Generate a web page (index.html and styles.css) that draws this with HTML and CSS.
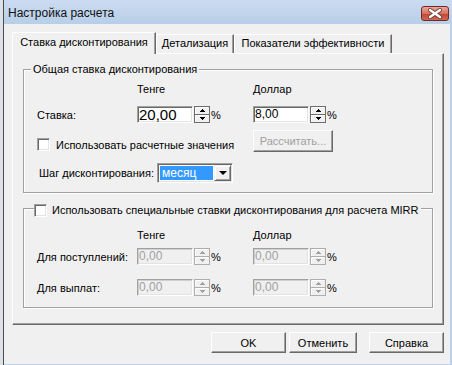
FILE: index.html
```html
<!DOCTYPE html>
<html>
  <head>
    <meta charset="UTF-8" />
    <title>Настройка расчета</title>
    <link rel="stylesheet" href="styles.css">
  </head>
  <body>
    <div class="window">
      <div class="titlebar">
        <span class="title">Настройка расчета</span>
        <span class="close">
          <svg width="26" height="13" viewBox="0 0 26 13">
            <path d="M8 3 L18 10 M18 3 L8 10" stroke="#6a3b35" stroke-width="4" stroke-linecap="round" fill="none" />
            <path d="M8 3 L18 10 M18 3 L8 10" stroke="#fff" stroke-width="2.4" stroke-linecap="round" fill="none" />
          </svg>
        </span>
      </div>

      <div class="client">
        <div class="tabs">
          <div class="tab active">Ставка дисконтирования</div>
          <div class="tab tab-detail">Детализация</div>
          <div class="tab tab-eff">Показатели эффективности</div>
        </div>

        <div class="panel">
          <div class="group group-rate">
            <div class="group-title">Общая ставка дисконтирования</div>

            <div class="row row-head">
              <span></span>
              <span>Тенге</span>
              <span>Доллар</span>
            </div>

            <div class="row row-field">
              <span>Ставка:</span>
              <div class="field">
                <span class="edit big">20,00</span>
                <svg class="spin" width="16" height="17" viewBox="0 0 16 17" shape-rendering="crispEdges">
                  <rect x="0.5" y="0.5" width="15" height="16" fill="#f0f0f0" stroke="#6d6d6d" />
                  <path d="M1 8.5 H15" stroke="#6d6d6d" />
                  <path d="M1.5 1.5 H14 M1.5 1.5 V8 M1.5 9.5 H14 M1.5 9.5 V16" stroke="#fff" />
                  <polygon points="5,6 11,6 8,3" fill="#000" />
                  <polygon points="5,11 11,11 8,14" fill="#000" />
                </svg>
                <span class="pct">%</span>
              </div>
              <div class="field">
                <span class="edit">8,00</span>
                <svg class="spin" width="16" height="17" viewBox="0 0 16 17" shape-rendering="crispEdges">
                  <rect x="0.5" y="0.5" width="15" height="16" fill="#f0f0f0" stroke="#6d6d6d" />
                  <path d="M1 8.5 H15" stroke="#6d6d6d" />
                  <path d="M1.5 1.5 H14 M1.5 1.5 V8 M1.5 9.5 H14 M1.5 9.5 V16" stroke="#fff" />
                  <polygon points="5,6 11,6 8,3" fill="#000" />
                  <polygon points="5,11 11,11 8,14" fill="#000" />
                </svg>
                <span class="pct">%</span>
              </div>
            </div>

            <div class="row row-check">
              <div class="check-line">
                <span class="checkbox"></span>
                <span>Использовать расчетные значения</span>
              </div>
              <span class="btn btn-calc">Рассчитать...</span>
            </div>

            <div class="step-row">
              <span class="step-label">Шаг дисконтирования:</span>
              <div class="combo">
                <span class="combo-value">месяц</span>
                <span class="combo-btn"><span class="arrow-down"></span></span>
              </div>
            </div>
          </div>

          <div class="group group-mirr">
            <div class="group-check">
              <span class="checkbox"></span>
              <span>Использовать специальные ставки дисконтирования для расчета MIRR</span>
            </div>

            <div class="row row-head row-head-mirr">
              <span></span>
              <span>Тенге</span>
              <span>Доллар</span>
            </div>

            <div class="row row-field row-in">
              <span>Для поступлений:</span>
              <div class="field">
                <span class="edit disabled">0,00</span>
                <svg class="spin" width="16" height="17" viewBox="0 0 16 17" shape-rendering="crispEdges">
                  <rect x="0.5" y="0.5" width="15" height="16" fill="#f0f0f0" stroke="#adadad" />
                  <path d="M1 8.5 H15" stroke="#adadad" />
                  <path d="M1.5 1.5 H14 M1.5 1.5 V8 M1.5 9.5 H14 M1.5 9.5 V16" stroke="#fff" />
                  <polygon points="5,6 11,6 8,3" fill="#a0a0a0" />
                  <polygon points="5,11 11,11 8,14" fill="#a0a0a0" />
                </svg>
                <span class="pct">%</span>
              </div>
              <div class="field">
                <span class="edit disabled">0,00</span>
                <svg class="spin" width="16" height="17" viewBox="0 0 16 17" shape-rendering="crispEdges">
                  <rect x="0.5" y="0.5" width="15" height="16" fill="#f0f0f0" stroke="#adadad" />
                  <path d="M1 8.5 H15" stroke="#adadad" />
                  <path d="M1.5 1.5 H14 M1.5 1.5 V8 M1.5 9.5 H14 M1.5 9.5 V16" stroke="#fff" />
                  <polygon points="5,6 11,6 8,3" fill="#a0a0a0" />
                  <polygon points="5,11 11,11 8,14" fill="#a0a0a0" />
                </svg>
                <span class="pct">%</span>
              </div>
            </div>

            <div class="row row-field row-out">
              <span>Для выплат:</span>
              <div class="field">
                <span class="edit disabled">0,00</span>
                <svg class="spin" width="16" height="17" viewBox="0 0 16 17" shape-rendering="crispEdges">
                  <rect x="0.5" y="0.5" width="15" height="16" fill="#f0f0f0" stroke="#adadad" />
                  <path d="M1 8.5 H15" stroke="#adadad" />
                  <path d="M1.5 1.5 H14 M1.5 1.5 V8 M1.5 9.5 H14 M1.5 9.5 V16" stroke="#fff" />
                  <polygon points="5,6 11,6 8,3" fill="#a0a0a0" />
                  <polygon points="5,11 11,11 8,14" fill="#a0a0a0" />
                </svg>
                <span class="pct">%</span>
              </div>
              <div class="field">
                <span class="edit disabled">0,00</span>
                <svg class="spin" width="16" height="17" viewBox="0 0 16 17" shape-rendering="crispEdges">
                  <rect x="0.5" y="0.5" width="15" height="16" fill="#f0f0f0" stroke="#adadad" />
                  <path d="M1 8.5 H15" stroke="#adadad" />
                  <path d="M1.5 1.5 H14 M1.5 1.5 V8 M1.5 9.5 H14 M1.5 9.5 V16" stroke="#fff" />
                  <polygon points="5,6 11,6 8,3" fill="#a0a0a0" />
                  <polygon points="5,11 11,11 8,14" fill="#a0a0a0" />
                </svg>
                <span class="pct">%</span>
              </div>
            </div>
          </div>
        </div>

        <div class="buttons">
          <span class="btn btn-ok">OK</span>
          <span class="btn btn-cancel">Отменить</span>
          <span class="btn btn-help">Справка</span>
        </div>
      </div>
    </div>
  </body>
</html>
```

FILE: styles.css
```css
* {
  box-sizing: border-box;
  margin: 0;
  padding: 0;
}

body {
  width: 452px;
  height: 365px;
  overflow: hidden;
  background-color: #dde2e8;
  font-family: "Liberation Sans", Arial, sans-serif;
  font-size: 11px;
  color: #000;
}

.window {
  margin-left: 3px;
  height: 365px;
  border-left: 1px solid #4a4a4a;
  background-color: #bcd2ec;
  display: flex;
  flex-direction: column;
}

.titlebar {
  height: 24px;
  display: flex;
  justify-content: space-between;
  align-items: flex-start;
  padding: 0 3px 0 4px;
  background: linear-gradient(#cbdcf0, #b7cee9);
}

.title {
  margin-top: 6px;
  font-size: 12px;
  line-height: 14px;
  color: #111;
}

.close {
  margin-top: 6px;
  width: 28px;
  height: 15px;
  border: 1px solid #6f2a24;
  border-radius: 3px;
  background: linear-gradient(#eaa79a, #d8705f 50%, #c4452f 51%, #cf6a55);
  display: flex;
}

.client {
  flex: 1;
  margin: 0 2px 1px 0;
  padding-top: 8px;
  background-color: #f0f0f0;
}

/* tabs */

.tabs {
  display: flex;
  align-items: flex-end;
  height: 21px;
  margin-left: 8px;
}

.tab {
  height: 19px;
  padding-top: 0;
  border: 1px solid;
  border-bottom: none;
  border-color: #fff #696969 #fff #fff;
  box-shadow: inset -1px 0 #a0a0a0;
  text-align: center;
  line-height: 17px;
  white-space: nowrap;
}

.tab.active {
  position: relative;
  z-index: 1;
  width: 144px;
  height: 22px;
  margin-bottom: -1px;
  padding-top: 1px;
  background-color: #f0f0f0;
}

.tab-detail {
  width: 78px;
}

.tab-eff {
  width: 158px;
}

.panel {
  width: 432px;
  height: 272px;
  margin-left: 8px;
  padding: 15px 0 0 10px;
  border: 1px solid;
  border-color: #fff #696969 #696969 #fff;
  box-shadow: inset -1px -1px #a0a0a0;
}

/* group boxes */

.group {
  width: 410px;
  padding-left: 13px;
  border: 1px solid #a0a0a0;
  box-shadow: inset 1px 1px #fff, 1px 1px #fff;
}

.group-rate {
  height: 124px;
}

.group-mirr {
  height: 100px;
  margin-top: 15px;
}

.group-title {
  width: fit-content;
  margin: -7px 0 0 -6px;
  padding: 0 2px;
  line-height: 13px;
  background-color: #f0f0f0;
}

.group-check {
  display: flex;
  align-items: center;
  gap: 5px;
  width: fit-content;
  height: 14px;
  margin: -6px 0 0 -3px;
  padding-right: 2px;
  background-color: #f0f0f0;
  white-space: nowrap;
}

.row {
  display: grid;
  grid-template-columns: 100px 116px auto;
  align-items: center;
}

.row-head {
  height: 13px;
  margin-top: 7px;
  line-height: 13px;
}

.row-head-mirr {
  margin-top: 12px;
}

.row-field {
  height: 17px;
  margin-top: 10px;
}

.row-in {
  margin-top: 6px;
}

.row-out {
  margin-top: 14px;
}

.row-check {
  height: 22px;
  margin-top: 7px;
  align-items: start;
}

.check-line {
  grid-column: 1 / 3;
  display: flex;
  align-items: center;
  gap: 6px;
  height: 15px;
  margin-top: 7px;
  white-space: nowrap;
}

.step-row {
  display: flex;
  align-items: center;
  height: 20px;
  margin-top: 11px;
  padding-left: 2px;
}

.step-label {
  width: 118px;
}

/* controls */

.field {
  display: flex;
  align-items: center;
}

.edit {
  width: 56px;
  height: 17px;
  margin-right: 1px;
  padding-left: 1px;
  border: 1px solid;
  border-color: #a0a0a0 #fff #fff #a0a0a0;
  box-shadow: inset 1px 1px #696969, inset -1px -1px #e3e3e3;
  background-color: #fff;
  font-size: 12px;
  line-height: 15px;
}

.edit.big {
  font-size: 15px;
}

.edit.disabled {
  background-color: #f0f0f0;
  color: #a0a0a0;
  box-shadow: inset 1px 1px #cfcfcf, inset -1px -1px #e3e3e3;
}

.spin {
  display: block;
}

.pct {
  margin-left: 1px;
}

.checkbox {
  width: 13px;
  height: 13px;
  border: 1px solid;
  border-color: #a0a0a0 #fff #fff #a0a0a0;
  box-shadow: inset 1px 1px #696969, inset -1px -1px #e3e3e3;
  background-color: #fff;
}

.combo {
  display: flex;
  width: 76px;
  height: 20px;
  padding: 1px;
  border: 1px solid;
  border-color: #a0a0a0 #fff #fff #a0a0a0;
  box-shadow: inset 1px 1px #696969, inset -1px -1px #e3e3e3;
  background-color: #fff;
}

.combo-value {
  flex: 1;
  margin: 1px;
  padding-left: 2px;
  background-color: #3399ff;
  color: #fff;
  font-size: 12px;
  line-height: 14px;
}

.combo-btn {
  width: 17px;
  display: flex;
  align-items: center;
  justify-content: center;
  border: 1px solid;
  border-color: #f0f0f0 #696969 #696969 #f0f0f0;
  box-shadow: inset 1px 1px #fff, inset -1px -1px #a0a0a0;
  background-color: #f0f0f0;
}

.arrow-down {
  width: 0;
  height: 0;
  border-left: 4px solid transparent;
  border-right: 4px solid transparent;
  border-top: 4px solid #000;
}

.btn {
  display: flex;
  align-items: center;
  justify-content: center;
  height: 21px;
  border: 1px solid;
  border-color: #fff #696969 #696969 #fff;
  box-shadow: inset -1px -1px #a0a0a0;
  background-color: #f0f0f0;
  white-space: nowrap;
}

.btn-calc {
  width: 80px;
  height: 22px;
  color: #a0a0a0;
}

.buttons {
  display: flex;
  justify-content: flex-end;
  margin-top: 7px;
  padding-right: 6px;
}

.btn-ok {
  width: 75px;
  margin-right: 3px;
}

.btn-cancel {
  width: 68px;
  margin-right: 12px;
}

.btn-help {
  width: 75px;
}
```
